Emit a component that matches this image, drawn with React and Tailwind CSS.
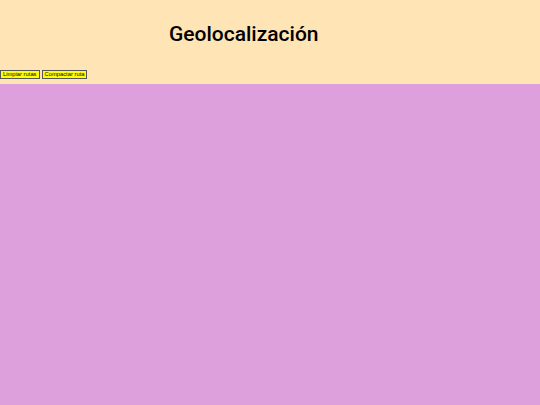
export default function App() {
  return (
    <div className="flex flex-col h-[405px] w-full font-['Roboto',sans-serif]">
      <div className="bg-[#ffe4b5] h-[84px] flex flex-col">
        <div className="pt-[21px] pl-[169px]">
          <h1 className="text-[21px] leading-[26px] font-medium text-black">Geolocalización</h1>
        </div>
        <div className="flex gap-[2px] mt-[23px]">
          <button className="bg-[#ffff00] border border-[#555] text-[5.8px] leading-[7px] px-[2px] h-[9px] font-['Liberation_Sans',sans-serif] text-black">
            Limpiar rutas
          </button>
          <button className="bg-[#ffff00] border border-[#555] text-[5.8px] leading-[7px] px-[2px] h-[9px] font-['Liberation_Sans',sans-serif] text-black">
            Compactar ruta
          </button>
        </div>
      </div>
      <div className="flex-1 bg-[#dda0dd]"></div>
    </div>
  );
}
